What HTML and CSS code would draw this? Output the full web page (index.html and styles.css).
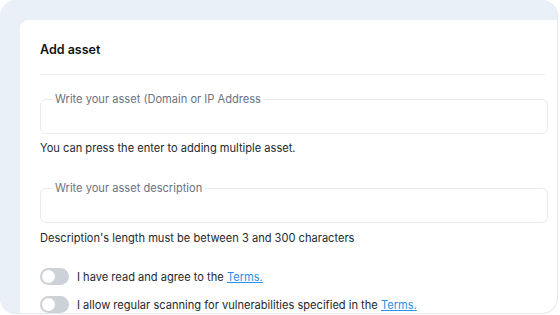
FILE: index.html
```html
<!DOCTYPE html>
<html lang="en">
<head>
  <meta charset="UTF-8">
  <meta name="viewport" content="width=device-width, initial-scale=1.0">
  <title>Add asset</title>
  <link rel="stylesheet" href="styles.css">
</head>
<body>
  <div class="frame">
    <div class="card">
      <h2 class="card-title">Add asset</h2>

      <fieldset class="field">
        <legend>Write your asset (Domain or IP Address</legend>
        <input type="text">
      </fieldset>
      <p class="hint">You can press the enter to adding multiple asset.</p>

      <fieldset class="field">
        <legend>Write your asset description</legend>
        <input type="text">
      </fieldset>
      <p class="hint">Description's length must be between 3 and 300 characters</p>

      <div class="checks">
        <label class="check">
          <span class="toggle"></span>
          <span>I have read and agree to the <a href="#">Terms.</a></span>
        </label>
        <label class="check">
          <span class="toggle"></span>
          <span>I allow regular scanning for vulnerabilities specified in the <a href="#">Terms.</a></span>
        </label>
      </div>
    </div>
  </div>
</body>
</html>
```

FILE: styles.css
```css
body {
  margin: 0;
  background-color: #fff;
  font-family: Inter, "Noto Sans", sans-serif;
  color: #1f2328;
}

.frame {
  box-sizing: border-box;
  width: 558px;
  height: 314px;
  padding: 20px 0 0 20px;
  background-color: #e9f0f7;
  border-radius: 16px;
  overflow: hidden;
  border-right: 1px solid #e3e8ee;
  border-bottom: 1px solid #e3e8ee;
}

.card {
  height: 100%;
  background-color: #fff;
  border-radius: 8px 0 12px 0;
  padding: 0 9px 0 20px;
}

.card-title {
  margin: 0;
  padding: 22px 0 17px;
  font-size: 12.5px;
  font-weight: 600;
  color: #111;
  border-bottom: 1px solid #ebedf0;
  margin-right: 3px;
}

.field {
  margin: 17px 0 0;
  padding: 0 12px;
  border: 1px solid #e8eaed;
  border-radius: 6px;
  height: 42px;
  box-sizing: border-box;
}

.field legend {
  padding: 0 2px;
  font-size: 11.1px;
  color: #6b7280;
  line-height: 14px;
}

.field input {
  border: 0;
  outline: none;
  width: 100%;
  background: transparent;
}

.hint {
  margin: 7px 0 0;
  font-size: 11.1px;
  color: #24292f;
}

.field + .hint + .field {
  margin-top: 26px;
}

.field + .hint + .field + .hint {
  margin-top: 8px;
}

.checks {
  margin-top: 23px;
  display: flex;
  flex-direction: column;
  gap: 11px;
}

.check {
  display: flex;
  align-items: center;
  gap: 8px;
  font-size: 11.1px;
  color: #24292f;
}

.toggle {
  position: relative;
  width: 29px;
  height: 17px;
  border-radius: 9px;
  background-color: #cdd2d8;
  flex-shrink: 0;
}

.toggle:before {
  content: "";
  position: absolute;
  top: 2px;
  left: 2px;
  width: 13px;
  height: 13px;
  border-radius: 50%;
  background-color: #fff;
}

.check a {
  color: #2b8ee8;
  text-decoration: underline;
}
```
